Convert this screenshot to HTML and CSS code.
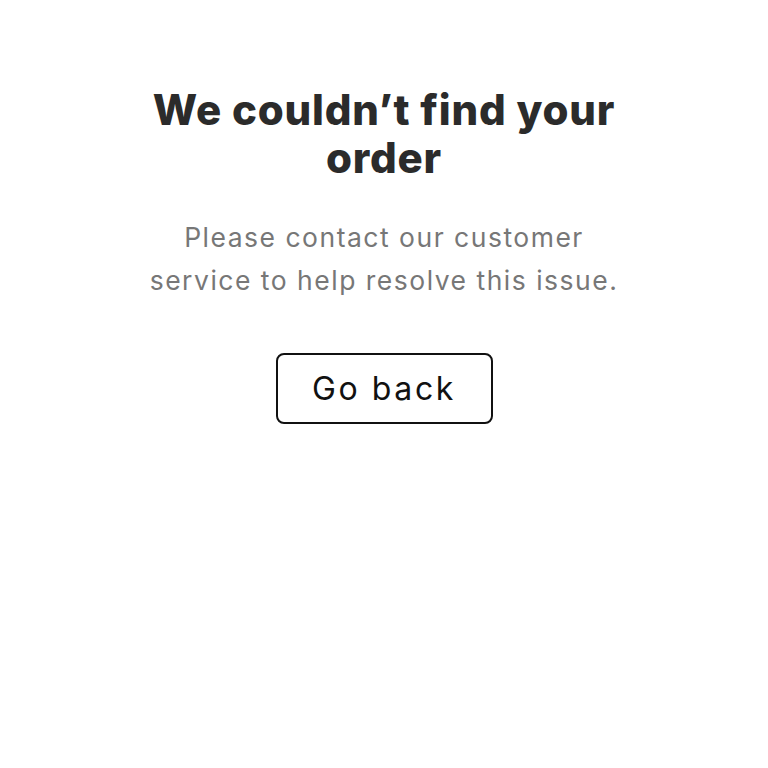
FILE: index.html
```html
<!DOCTYPE html>
<html lang="en">
<head>
<meta charset="utf-8">
<title>Order not found</title>
<link rel="stylesheet" href="styles.css">
</head>
<body>
<main class="page">
  <section class="notice">
    <h1 class="notice-title">We couldn’t find your order</h1>
    <p class="notice-text">Please contact our customer service to help resolve this issue.</p>
    <button class="back-btn" type="button">Go back</button>
  </section>
</main>
</body>
</html>
```
FILE: styles.css
```css
html, body {
  margin: 0;
  padding: 0;
  background: #ffffff;
}
body {
  font-family: "Inter", "DejaVu Sans", sans-serif;
}
.page {
  display: flex;
  justify-content: center;
  padding-top: 86px;
}
.notice {
  width: 480px;
  display: flex;
  flex-direction: column;
  align-items: center;
  text-align: center;
}
.notice-title {
  margin: 0;
  font-size: 42px;
  line-height: 48px;
  font-weight: 800;
  color: #2b2b2b;
  letter-spacing: 0.8px;
}
.notice-text {
  margin: 34px 0 0;
  font-size: 26.5px;
  line-height: 43px;
  font-weight: 400;
  color: #777777;
  letter-spacing: 1.5px;
}
.back-btn {
  margin-top: 51px;
  width: 217px;
  height: 71px;
  border: 2px solid #111111;
  border-radius: 8px;
  background: #ffffff;
  font-family: inherit;
  font-size: 32px;
  color: #111111;
  letter-spacing: 2.6px;
  padding: 0;
}
```
